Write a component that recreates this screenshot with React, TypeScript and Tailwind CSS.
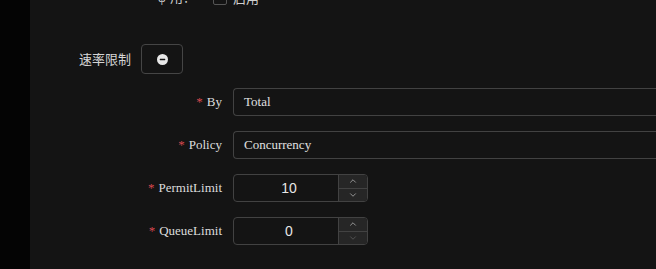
import { ChevronUp, ChevronDown } from 'lucide-react';

const serif = { fontFamily: '"Liberation Serif", "Noto Sans CJK SC", serif' };

const Label = ({ text }: { text: string }) => (
  <div className="flex w-[203px] shrink-0 items-center justify-end pr-[11px] text-[13px] text-[#dcdcdc]" style={serif}>
    <span className="mr-[4px] text-[#d9484f]">*</span>
    {text}
  </div>
);

const SelectRow = ({ label, value }: { label: string; value: string }) => (
  <div className="flex h-[28px] items-center">
    <Label text={label} />
    <div
      className="flex h-full flex-1 items-center rounded-l-[4px] border border-r-0 border-[#424242] bg-[#141414] pl-[10px] text-[13px] text-[#e0e0e0]"
      style={serif}
    >
      {value}
    </div>
  </div>
);

const NumberRow = ({ label, value, atMin }: { label: string; value: string; atMin?: boolean }) => (
  <div className="flex h-[28px] items-center">
    <Label text={label} />
    <div className="flex h-full w-[135px] overflow-hidden rounded-[4px] border border-[#424242] bg-[#141414]">
      <div className="flex flex-1 items-center justify-center pl-[6px] font-['Liberation_Sans',sans-serif] text-[14px] text-[#e6e6e6]">
        {value}
      </div>
      <div className="flex w-[29px] flex-col border-l border-[#424242] bg-[#262626]">
        <div className="flex flex-1 items-center justify-center border-b border-[#424242] text-[#a8a8a8]">
          <ChevronUp size={10} strokeWidth={2} />
        </div>
        <div className={`flex flex-1 items-center justify-center ${atMin ? 'text-[#5a5a5a]' : 'text-[#a8a8a8]'}`}>
          <ChevronDown size={10} strokeWidth={2} />
        </div>
      </div>
    </div>
  </div>
);

export default function App() {
  return (
    <div className="flex h-[269px] w-[656px] overflow-hidden bg-[#141414]">
      <div className="w-[30px] shrink-0 bg-[#040404]" />
      <div className="flex flex-1 flex-col bg-[#141414]">
        {/* partially visible row on top */}
        <div className="-mt-[10px] flex h-[15px] items-center text-[13px] text-[#d0d0d0]" style={serif}>
          <div className="w-[166px] shrink-0 text-right">
            <span className="mr-[4px]">ψ</span>
            <span>用？</span>
          </div>
          <div className="ml-[17px] h-[14px] w-[14px] rounded-[2px] border border-[#555] bg-[#141414]" />
          <span className="ml-[6px] font-['Noto_Sans_CJK_SC',sans-serif]">启用</span>
        </div>

        {/* 速率限制 */}
        <div className="mt-[39px] flex h-[30px] items-center">
          <span className="ml-[49px] font-['Noto_Sans_CJK_SC',sans-serif] text-[13px] text-[#d4d4d4]">速率限制</span>
          <button className="ml-[10px] flex h-[30px] w-[42px] items-center justify-center rounded-[4px] border border-[#454545] bg-[#141414]">
            <svg viewBox="0 0 16 16" className="h-[11px] w-[11px]">
              <circle cx="8" cy="8" r="8" fill="#e8e8e8" />
              <rect x="4" y="7" width="8" height="2" rx="0.5" fill="#141414" />
            </svg>
          </button>
        </div>

        <div className="mt-[14px] flex flex-col gap-[15px]">
          <SelectRow label="By" value="Total" />
          <SelectRow label="Policy" value="Concurrency" />
          <NumberRow label="PermitLimit" value="10" />
          <NumberRow label="QueueLimit" value="0" atMin />
        </div>
      </div>
    </div>
  );
}
